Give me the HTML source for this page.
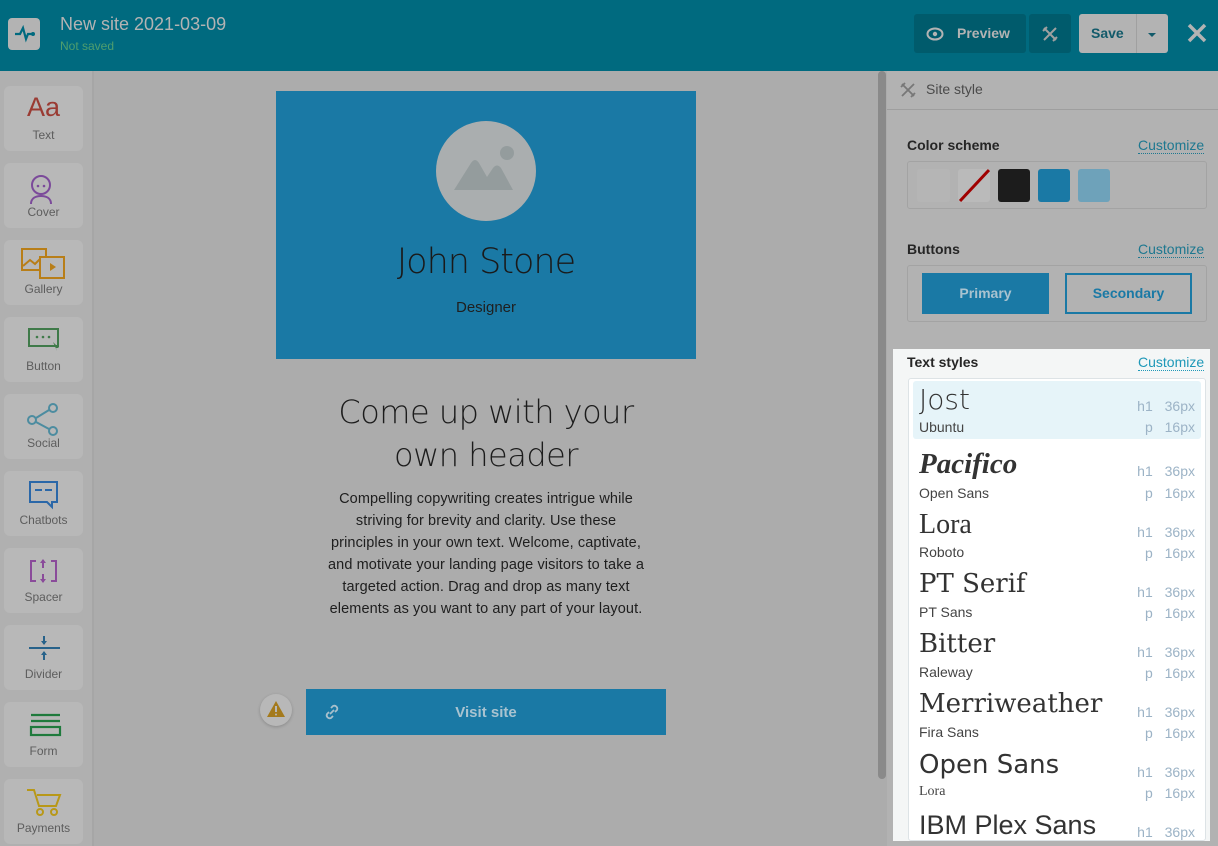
<!DOCTYPE html>
<html><head><meta charset="utf-8"><style>
*{margin:0;padding:0;box-sizing:border-box}
body{width:1218px;height:846px;overflow:hidden;background:#acacac;font-family:"Liberation Sans",sans-serif;position:relative}
.a{position:absolute}
.hdr{left:0;top:0;width:1218px;height:71px;background:#006a7f}
.side{left:0;top:71px;width:94px;height:775px;background:#b0b0b0;border-right:2px solid #a6a6a6}
.tile{left:4px;width:79px;height:65px;background:#b8b8b8;border-radius:6px;text-align:center;font-size:12px;color:#5d5d5d}
.tile span{position:absolute;left:0;right:0;bottom:9px}
.tile svg{position:absolute;left:22px;top:8px}
.rp{left:887px;top:71px;width:331px;height:775px;background:#b2b2b2}
.lbl{font-size:14px;font-weight:bold;color:#262626}
.cz{font-size:14px;color:#1e7890;border-bottom:1px dotted #1e7890;line-height:15px}
.row{left:913px;width:288px;height:58px}
.f1{position:absolute;left:6px;top:4px;font-size:28px;color:#333;white-space:nowrap}
.f2{position:absolute;left:6px;top:38px;font-size:14px;color:#444}
.m1{position:absolute;right:6px;top:17px;font-size:14px;color:#9cb3c6;word-spacing:8px}
.m2{position:absolute;right:6px;top:38px;font-size:14px;color:#9cb3c6;word-spacing:8px}
</style></head><body>
<div class="a hdr">
 <div class="a" style="left:8px;top:18px;width:32px;height:32px;background:#b3b3b3;border-radius:4px"></div>
 <svg class="a" style="left:12px;top:22px" width="24" height="24"><path d="M3 12h5l3-6 3 11 2-5h4" stroke="#006a7f" stroke-width="2.2" fill="none"/><circle cx="21" cy="12" r="2" fill="#006a7f"/></svg>
 <div class="a" style="left:60px;top:14px;font-size:18px;color:#b3b3b3">New site 2021-03-09</div>
 <div class="a" style="left:60px;top:39px;font-size:12px;color:#4f9e6e">Not saved</div>
 <div class="a" style="left:914px;top:14px;width:112px;height:39px;background:#005b6c;border-radius:3px"></div>
 <svg class="a" style="left:926px;top:27px" width="18" height="14"><ellipse cx="9" cy="7" rx="7.5" ry="5.5" fill="none" stroke="#b3b3b3" stroke-width="2"/><circle cx="9" cy="7" r="2.2" fill="#b3b3b3"/></svg>
 <div class="a" style="left:957px;top:25px;font-size:14px;font-weight:bold;color:#b3b3b3">Preview</div>
 <div class="a" style="left:1029px;top:14px;width:42px;height:39px;background:#005b6c;border-radius:3px"></div>
 <svg class="a" style="left:1041px;top:25px" width="18" height="18"><path d="M3 15L15 3M3 3l12 12M2 6l4-4M12 16l4-4" stroke="#a0a0a0" stroke-width="2" fill="none"/></svg>
 <div class="a" style="left:1079px;top:14px;width:89px;height:39px;background:#b3b3b3;border-radius:3px"></div>
 <div class="a" style="left:1136px;top:14px;width:1px;height:39px;background:#a0a0a0"></div>
 <div class="a" style="left:1091px;top:25px;font-size:14px;font-weight:bold;color:#125a6a">Save</div>
 <div class="a" style="left:1148px;top:33px;border:4px solid transparent;border-top-color:#125a6a"></div>
 <svg class="a" style="left:1187px;top:23px" width="20" height="20"><path d="M2 2l16 16M18 2L2 18" stroke="#b3b3b3" stroke-width="3.5"/></svg>
</div>
<div class="a side"></div>
<div class="a tile" style="top:86px"><div class="a" style="left:0;right:0;top:6px;font-size:27px;color:#9a3b33">Aa</div><span>Text</span></div>
<div class="a tile" style="top:163px"><svg width="34" height="34"><circle cx="15" cy="14" r="9" fill="none" stroke="#7b4a9a" stroke-width="2"/><circle cx="12" cy="15" r="1.3" fill="#7b4a9a"/><circle cx="18" cy="15" r="1.3" fill="#7b4a9a"/><path d="M5 33c0-6 5-8 10-8s10 2 10 8" fill="none" stroke="#7b4a9a" stroke-width="2"/></svg><span>Cover</span></div>
<div class="a tile" style="top:240px"><svg width="46" height="34" style="left:17px"><rect x="1" y="1" width="24" height="21" fill="none" stroke="#b87e18" stroke-width="2"/><path d="M2 18l7-6 5 4 6-6 5 4" fill="none" stroke="#b87e18" stroke-width="2"/><rect x="19" y="9" width="24" height="21" fill="#b8b8b8" stroke="#b87e18" stroke-width="2"/><path d="M29 15l6 4-6 4z" fill="#b87e18"/></svg><span>Gallery</span></div>
<div class="a tile" style="top:317px"><svg width="36" height="34"><rect x="3" y="4" width="29" height="17" fill="none" stroke="#3f7a49" stroke-width="2"/><circle cx="11" cy="12" r="1.3" fill="#3f7a49"/><circle cx="17" cy="12" r="1.3" fill="#3f7a49"/><circle cx="23" cy="12" r="1.3" fill="#3f7a49"/><path d="M27 17l6 6-3 0 1 3z" fill="#3f7a49"/></svg><span>Button</span></div>
<div class="a tile" style="top:394px"><svg width="36" height="34"><circle cx="6" cy="18" r="4" fill="none" stroke="#4c8ca0" stroke-width="2"/><circle cx="27" cy="6" r="4" fill="none" stroke="#4c8ca0" stroke-width="2"/><circle cx="27" cy="29" r="4" fill="none" stroke="#4c8ca0" stroke-width="2"/><path d="M10 16l13-8M10 20l13 7" stroke="#4c8ca0" stroke-width="2"/></svg><span>Social</span></div>
<div class="a tile" style="top:471px"><svg width="36" height="34"><path d="M4 3h27v20h-5v5l-5-5H4z" fill="none" stroke="#2a67a8" stroke-width="2"/><path d="M9 11h7M19 11h7" stroke="#2a67a8" stroke-width="2"/></svg><span>Chatbots</span></div>
<div class="a tile" style="top:548px"><svg width="36" height="34"><path d="M10 5H5v20h5M25 5h5v20h-5M17 4v8M17 18v8" fill="none" stroke="#8a4b9a" stroke-width="2"/><path d="M14 7l3-4 3 4zM14 23l3 4 3-4z" fill="#8a4b9a"/></svg><span>Spacer</span></div>
<div class="a tile" style="top:625px"><svg width="36" height="34"><path d="M3 15h31M18 3v8M18 19v8" stroke="#27628a" stroke-width="2"/><path d="M15 8l3 4 3-4zM15 22l3-4 3 4z" fill="#27628a"/></svg><span>Divider</span></div>
<div class="a tile" style="top:702px"><svg width="36" height="34"><path d="M5 5h29M5 11h29" stroke="#1f7a3c" stroke-width="2.2"/><rect x="5" y="17" width="29" height="8" fill="none" stroke="#1f7a3c" stroke-width="2.2"/></svg><span>Form</span></div>
<div class="a tile" style="top:779px"><svg width="36" height="34"><path d="M1 3h7l5 16h17l4-11H11" fill="none" stroke="#b89818" stroke-width="2"/><circle cx="14" cy="25" r="3" fill="none" stroke="#b89818" stroke-width="2"/><circle cx="28" cy="25" r="3" fill="none" stroke="#b89818" stroke-width="2"/></svg><span>Payments</span></div>

<div class="a" style="left:276px;top:91px;width:420px;height:268px;background:#1a79a5"></div>
<div class="a" style="left:436px;top:121px;width:100px;height:100px;border-radius:50%;background:#aaaeaf"></div>
<svg class="a" style="left:453px;top:143px" width="64" height="50"><path d="M1 47L18 20q4-6 8 0l8 14 6-9q4-5 8 0l12 22z" fill="#949c9d"/><circle cx="54" cy="10" r="7" fill="#949c9d"/></svg>
<div class="a" style="left:276px;top:242px;width:420px;text-align:center;font-size:35px;color:#1a1a1a;font-family:'DejaVu Sans',sans-serif;font-weight:200;letter-spacing:-1px">John Stone</div>
<div class="a" style="left:276px;top:299px;width:420px;text-align:center;font-size:15px;color:#1f1f1f">Designer</div>
<div class="a" style="left:276px;top:391px;width:420px;text-align:center;font-size:32px;line-height:43px;color:#1c1c1c;font-family:'DejaVu Sans',sans-serif;font-weight:200;letter-spacing:-0.5px">Come up with your<br>own header</div>
<div class="a" style="left:276px;top:488px;width:420px;text-align:center;font-size:14.5px;line-height:22px;color:#1e1e1e;white-space:nowrap;letter-spacing:0.1px">Compelling copywriting creates intrigue while<br>striving for brevity and clarity. Use these<br>principles in your own text. Welcome, captivate,<br>and motivate your landing page visitors to take a<br>targeted action. Drag and drop as many text<br>elements as you want to any part of your layout.</div>
<div class="a" style="left:260px;top:694px;width:32px;height:32px;border-radius:50%;background:#b8b8b8;box-shadow:0 1px 3px rgba(0,0,0,.2)"></div>
<svg class="a" style="left:266px;top:700px" width="20" height="18"><path d="M10 1L19 17H1z" fill="#a47a1c"/><path d="M10 6v6" stroke="#b8b8b8" stroke-width="2"/><circle cx="10" cy="14.5" r="1" fill="#b8b8b8"/></svg>
<div class="a" style="left:306px;top:689px;width:360px;height:46px;background:#1a79a5"></div>
<svg class="a" style="left:323px;top:703px" width="18" height="18"><path d="M7 11l4-4M8 5l2-2a3 3 0 014 4l-2 2M10 13l-2 2a3 3 0 01-4-4l2-2" fill="none" stroke="#a8c0cc" stroke-width="1.8"/></svg>
<div class="a" style="left:306px;top:704px;width:360px;text-align:center;font-size:15px;font-weight:bold;color:#a9c3d0">Visit site</div>
<div class="a" style="left:878px;top:71px;width:8px;height:708px;background:#8a8a8a;border-radius:4px"></div>

<div class="a rp"></div>
<svg class="a" style="left:899px;top:81px" width="18" height="18"><path d="M3 15L15 3M3 3l12 12M2 6l4-4M12 16l4-4" stroke="#777" stroke-width="1.8" fill="none"/></svg>
<div class="a" style="left:926px;top:81px;font-size:14px;color:#4a4a4a">Site style</div>
<div class="a" style="left:887px;top:109px;width:331px;height:1px;background:#9e9e9e"></div>
<div class="a lbl" style="left:907px;top:137px">Color scheme</div>
<div class="a cz" style="left:1138px;top:138px">Customize</div>
<div class="a" style="left:907px;top:161px;width:300px;height:48px;border:1px solid #a3a3a3;border-radius:3px"></div>
<div class="a" style="left:917px;top:169px;width:33px;height:33px;background:#b5b5b5;border-radius:3px"></div>
<div class="a" style="left:958px;top:169px;width:32px;height:33px;background:#bababa;border-radius:3px;overflow:hidden"><svg width="32" height="33"><path d="M2 32L31 1" stroke="#a00000" stroke-width="3"/></svg></div>
<div class="a" style="left:998px;top:169px;width:32px;height:33px;background:#1c1c1c;border-radius:3px"></div>
<div class="a" style="left:1038px;top:169px;width:32px;height:33px;background:#1a79a5;border-radius:3px"></div>
<div class="a" style="left:1078px;top:169px;width:32px;height:33px;background:#6ea2ba;border-radius:3px"></div>
<div class="a lbl" style="left:907px;top:241px">Buttons</div>
<div class="a cz" style="left:1138px;top:242px">Customize</div>
<div class="a" style="left:907px;top:265px;width:300px;height:57px;border:1px solid #a3a3a3;border-radius:3px"></div>
<div class="a" style="left:922px;top:273px;width:127px;height:41px;background:#1a79a5;color:#a9c3d0;font-size:14px;font-weight:bold;text-align:center;line-height:41px">Primary</div>
<div class="a" style="left:1065px;top:273px;width:127px;height:41px;border:2px solid #1a79a5;color:#1a79a5;font-size:14px;font-weight:bold;text-align:center;line-height:37px">Secondary</div>

<div class="a" style="left:893px;top:349px;width:317px;height:492px;background:#f4f6f6"></div>
<div class="a lbl" style="left:907px;top:354px">Text styles</div>
<div class="a cz" style="left:1138px;top:355px;color:#1e98b8;border-color:#1e98b8">Customize</div>
<div class="a" style="left:908px;top:378px;width:298px;height:463px;background:#fff;border:1px solid #dde3e6;border-radius:3px;overflow:hidden"></div>
<div class="a row" style="top:381px;background:#e6f4f9;border-radius:3px"><div class="f1" style="font-family:'DejaVu Sans';font-weight:200;top:2px">Jost</div><div class="f2" style="top:38px">Ubuntu</div><div class="m1">h1 36px</div><div class="m2">p 16px</div></div>
<div class="a row" style="top:444px"><div class="f1" style="font-family:'Liberation Serif';font-style:italic;font-weight:bold;font-size:29px;top:4px">Pacifico</div><div class="f2" style="top:41px">Open Sans</div><div class="m1" style="top:19px">h1 36px</div><div class="m2" style="top:41px">p 16px</div></div>
<div class="a row" style="top:507px"><div class="f1" style="font-family:'Liberation Serif';top:2px">Lora</div><div class="f2" style="top:37px">Roboto</div><div class="m1">h1 36px</div><div class="m2" style="top:38px">p 16px</div></div>
<div class="a row" style="top:567px"><div class="f1" style="font-family:'DejaVu Serif';font-size:26px;top:2px">PT Serif</div><div class="f2" style="top:37px">PT Sans</div><div class="m1">h1 36px</div><div class="m2" style="top:38px">p 16px</div></div>
<div class="a row" style="top:627px"><div class="f1" style="font-family:'DejaVu Serif';font-size:26px;top:2px">Bitter</div><div class="f2" style="top:37px">Raleway</div><div class="m1">h1 36px</div><div class="m2" style="top:38px">p 16px</div></div>
<div class="a row" style="top:687px"><div class="f1" style="font-family:'DejaVu Serif';font-size:26px;top:2px">Merriweather</div><div class="f2" style="top:37px">Fira Sans</div><div class="m1">h1 36px</div><div class="m2" style="top:38px">p 16px</div></div>
<div class="a row" style="top:747px"><div class="f1" style="font-family:'DejaVu Sans';font-size:26px;top:3px">Open Sans</div><div class="f2" style="font-family:'Liberation Serif';top:37px">Lora</div><div class="m1">h1 36px</div><div class="m2" style="top:38px">p 16px</div></div>
<div class="a" style="left:913px;top:807px;width:288px;height:34px;overflow:hidden"><div class="f1" style="top:3px;font-size:27px">IBM Plex Sans</div><div class="m1">h1 36px</div></div>
</body></html>
